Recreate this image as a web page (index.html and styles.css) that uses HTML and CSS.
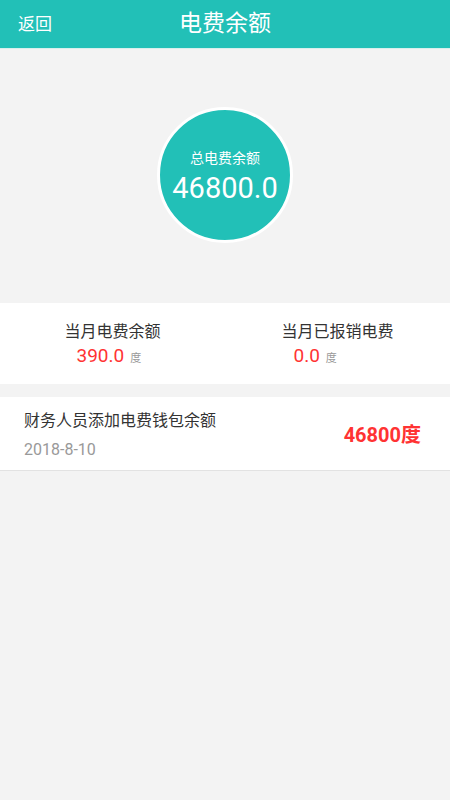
FILE: index.html
```html
<!DOCTYPE html>
<html lang="zh">
<head>
<meta charset="utf-8">
<title>电费余额</title>
<link rel="stylesheet" href="styles.css">
</head>
<body>
<header class="topbar">
  <span class="back">返回</span>
  <h1 class="title">电费余额</h1>
</header>
<section class="hero">
  <div class="circle">
    <div class="circle-label">总电费余额</div>
    <div class="circle-value">46800.0</div>
  </div>
</section>
<section class="stats">
  <div class="stat">
    <div class="stat-inner">
      <div class="stat-label">当月电费余额</div>
      <div class="stat-value"><span class="num">390.0</span><span class="unit">度</span></div>
    </div>
  </div>
  <div class="stat">
    <div class="stat-inner">
      <div class="stat-label">当月已报销电费</div>
      <div class="stat-value"><span class="num">0.0</span><span class="unit">度</span></div>
    </div>
  </div>
</section>
<section class="record">
  <div class="record-text">
    <div class="record-title">财务人员添加电费钱包余额</div>
    <div class="record-date">2018-8-10</div>
  </div>
  <div class="record-amount">46800度</div>
</section>
</body>
</html>
```
FILE: styles.css
```css
html, body {
  margin: 0;
  padding: 0;
}
body {
  width: 450px;
  min-height: 800px;
  background: #f3f3f3;
  font-family: Roboto, "Noto Sans CJK SC", sans-serif;
  color: #333;
}
.topbar {
  height: 48px;
  background: #22c0b7;
  border-bottom: 1px solid #d9efec;
  display: flex;
  align-items: center;
  justify-content: center;
  position: relative;
  color: #fff;
}
.back {
  position: absolute;
  left: 18px;
  top: 13px;
  font-size: 17px;
  line-height: 22px;
}
.title {
  margin: 0;
  font-size: 23px;
  font-weight: normal;
  line-height: 48px;
}
.hero {
  height: 254px;
  display: flex;
  justify-content: center;
  padding-top: 58px;
  box-sizing: border-box;
}
.circle {
  width: 130px;
  height: 130px;
  border-radius: 50%;
  background: #22c0b7;
  border: 3px solid #fff;
  display: flex;
  flex-direction: column;
  align-items: center;
  color: #fff;
}
.circle-label {
  margin-top: 39px;
  font-size: 14px;
  line-height: 18px;
}
.circle-value {
  margin-top: 4px;
  font-size: 29px;
  line-height: 34px;
}
.stats {
  background: #fff;
  height: 81px;
  display: flex;
}
.stat {
  flex: 1;
  display: flex;
  justify-content: center;
}
.stat-inner {
  padding-top: 18px;
}
.stat-label {
  font-size: 16px;
  line-height: 22px;
  color: #333;
}
.stat-value {
  padding-left: 12px;
  display: flex;
  align-items: baseline;
  line-height: 25px;
}
.num {
  font-size: 19px;
  color: #ff3333;
}
.unit {
  font-size: 11px;
  color: #999;
  margin-left: 6px;
}
.record {
  margin-top: 13px;
  background: #fff;
  height: 73px;
  border-bottom: 1px solid #e2e2e2;
  display: flex;
  align-items: center;
  padding: 0 29px 0 24px;
}
.record-text {
  flex: 1;
  padding-top: 4px;
}
.record-title {
  font-size: 16px;
  line-height: 22px;
  color: #333;
}
.record-date {
  margin-top: 7px;
  font-size: 16px;
  line-height: 22px;
  color: #999;
}
.record-amount {
  font-size: 20px;
  font-weight: bold;
  color: #ff3333;
}
```
